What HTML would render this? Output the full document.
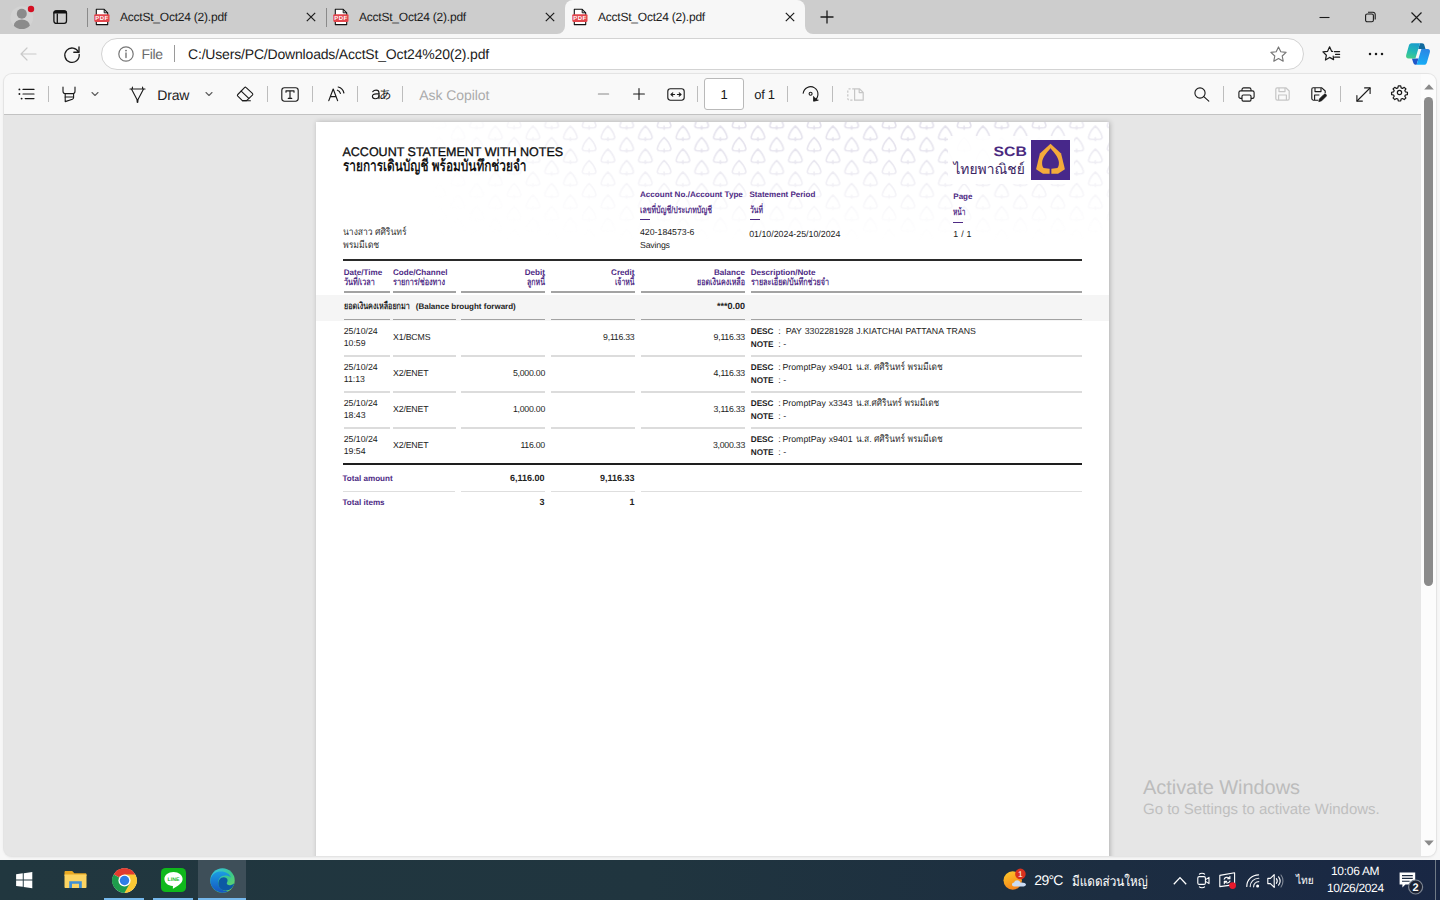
<!DOCTYPE html>
<html lang="en">
<head>
<meta charset="utf-8">
<title>AcctSt_Oct24 (2).pdf</title>
<style>
*{box-sizing:border-box;margin:0;padding:0}
html,body{width:1440px;height:900px;overflow:hidden}
body{position:relative;background:#f7f7f7;font-family:"Liberation Sans",sans-serif;color:#1b1b1b;text-rendering:geometricPrecision}
.abs{position:absolute}
svg{position:absolute;overflow:visible}
.t{position:absolute;white-space:nowrap;line-height:1}
/* ---------- tab strip ---------- */
#tabbar{position:absolute;left:0;top:0;width:1440px;height:34px;background:#cdcdcd}
#activetab{position:absolute;left:565px;top:0;width:240px;height:34px;background:#f7f7f7;border-radius:8px 8px 0 0}
.tabtitle{font-size:12px;top:10.5px;color:#1b1b1b;letter-spacing:-0.22px}
.tsep{position:absolute;width:1px;top:8px;height:19px;background:#8a8a8a}
/* ---------- address row ---------- */
#addr{position:absolute;left:0;top:34px;width:1440px;height:40px;background:#f7f7f7}
#pill{position:absolute;left:101px;top:4px;width:1203px;height:32px;background:#fff;border:1px solid #d3d3d3;border-radius:16px}
/* ---------- pdf toolbar ---------- */
#pdfwrap{position:absolute;left:4px;top:74px;width:1432px;height:782px;background:#e6e6e6;border-radius:8px;overflow:hidden;box-shadow:0 0 0 1px #e4e4e4,0 1px 3px rgba(0,0,0,.10)}
#ptool{position:absolute;left:0;top:0;width:1417px;height:41px;background:#f9f9f9;border-bottom:1px solid #c2c2c2}
.psep{position:absolute;width:1px;top:12px;height:16px;background:#bdbdbd}
#sbar{position:absolute;left:1417px;top:0;width:15px;height:783px;background:#fcfcfc}
/* ---------- page ---------- */
#page{position:absolute;left:312px;top:48px;width:793px;height:760px;background:#fff;box-shadow:1px 0 5px rgba(0,0,0,.24)}
/* ---------- taskbar ---------- */
#taskbar{position:absolute;left:0;top:860px;width:1440px;height:40px;background:linear-gradient(90deg,#21373f 0%,#20353f 45%,#1d2f40 70%,#192744 100%)}
svg.th text{font-family:"Liberation Sans",sans-serif}
</style>
</head>
<body>

<!-- ================= TAB STRIP ================= -->
<div id="tabbar">
  <div id="activetab"></div>
  <!-- inverted corners of the active tab -->
  <svg style="left:557px;top:26px" width="8" height="8" viewBox="0 0 8 8"><path d="M8 0V8H0A8 8 0 0 0 8 0Z" fill="#f7f7f7"/></svg>
  <svg style="left:805px;top:26px" width="8" height="8" viewBox="0 0 8 8"><path d="M0 0V8H8A8 8 0 0 1 0 0Z" fill="#f7f7f7"/></svg>

  <!-- profile avatar -->
  <svg style="left:9px;top:5px" width="28" height="25" viewBox="0 0 28 25">
    <defs><clipPath id="avc"><circle cx="12.8" cy="12.6" r="11.4"/></clipPath></defs>
    <circle cx="12.8" cy="12.6" r="11.4" fill="#d3d3d3"/>
    <g clip-path="url(#avc)" fill="#8b8b8b"><circle cx="12.8" cy="8.8" r="5"/><ellipse cx="12.8" cy="20.4" rx="8" ry="5.8"/></g>
    <circle cx="22" cy="4" r="3.2" fill="#d40f22"/>
  </svg>

  <!-- tab actions -->
  <svg style="left:52px;top:9px" width="16" height="16" viewBox="0 0 16 16" fill="none" stroke="#111" stroke-width="1.3">
    <rect x="1.9" y="1.8" width="12.6" height="12.6" rx="2.4"/>
    <path d="M1.3 4.6V4.2C1.3 2.4 2.5 1.2 4.3 1.2H12.1C13.9 1.2 15.1 2.4 15.1 4.2V4.6Z" fill="#111" stroke="none"/>
    <path d="M5.3 4.4V14.2"/>
  </svg>

  <div class="tsep" style="left:87px"></div>
  <div class="tsep" style="left:326px"></div>

  <!-- tab 1 -->
  <svg class="pdfico" style="left:94px;top:8px" width="16" height="18" viewBox="0 0 16 18">
    <path d="M2.3 1.3H10.2L13.7 4.8V16.6H2.3Z" fill="#fff" stroke="#111" stroke-width="1.1" stroke-linejoin="round"/>
    <path d="M10.2 1.3V4.8H13.7" fill="none" stroke="#111" stroke-width="1"/>
    <rect x="0.3" y="6.2" width="15.2" height="7.7" rx="1.1" fill="#e2464c"/>
    <text x="7.9" y="12.3" font-family="Liberation Sans, sans-serif" font-size="6" font-weight="700" fill="#fff" text-anchor="middle" letter-spacing="0.35">PDF</text>
  </svg>
  <div class="t tabtitle" style="left:120px">AcctSt_Oct24 (2).pdf</div>
  <svg style="left:306px;top:12px" width="10" height="10" viewBox="0 0 10 10" stroke="#1b1b1b" stroke-width="1.2" fill="none"><path d="M0.8 0.8L9.2 9.2M9.2 0.8L0.8 9.2"/></svg>

  <!-- tab 2 -->
  <svg class="pdfico" style="left:333px;top:8px" width="16" height="18" viewBox="0 0 16 18">
    <path d="M2.3 1.3H10.2L13.7 4.8V16.6H2.3Z" fill="#fff" stroke="#111" stroke-width="1.1" stroke-linejoin="round"/>
    <path d="M10.2 1.3V4.8H13.7" fill="none" stroke="#111" stroke-width="1"/>
    <rect x="0.3" y="6.2" width="15.2" height="7.7" rx="1.1" fill="#e2464c"/>
    <text x="7.9" y="12.3" font-family="Liberation Sans, sans-serif" font-size="6" font-weight="700" fill="#fff" text-anchor="middle" letter-spacing="0.35">PDF</text>
  </svg>
  <div class="t tabtitle" style="left:359px">AcctSt_Oct24 (2).pdf</div>
  <svg style="left:545px;top:12px" width="10" height="10" viewBox="0 0 10 10" stroke="#1b1b1b" stroke-width="1.2" fill="none"><path d="M0.8 0.8L9.2 9.2M9.2 0.8L0.8 9.2"/></svg>

  <!-- tab 3 (active) -->
  <svg class="pdfico" style="left:572px;top:8px" width="16" height="18" viewBox="0 0 16 18">
    <path d="M2.3 1.3H10.2L13.7 4.8V16.6H2.3Z" fill="#fff" stroke="#111" stroke-width="1.1" stroke-linejoin="round"/>
    <path d="M10.2 1.3V4.8H13.7" fill="none" stroke="#111" stroke-width="1"/>
    <rect x="0.3" y="6.2" width="15.2" height="7.7" rx="1.1" fill="#e2464c"/>
    <text x="7.9" y="12.3" font-family="Liberation Sans, sans-serif" font-size="6" font-weight="700" fill="#fff" text-anchor="middle" letter-spacing="0.35">PDF</text>
  </svg>
  <div class="t tabtitle" style="left:598px">AcctSt_Oct24 (2).pdf</div>
  <svg style="left:785px;top:12px" width="10" height="10" viewBox="0 0 10 10" stroke="#1b1b1b" stroke-width="1.2" fill="none"><path d="M0.8 0.8L9.2 9.2M9.2 0.8L0.8 9.2"/></svg>

  <!-- new tab -->
  <svg style="left:820px;top:10px" width="14" height="14" viewBox="0 0 14 14" stroke="#1b1b1b" stroke-width="1.3" fill="none"><path d="M7 0.5V13.5M0.5 7H13.5"/></svg>

  <!-- window controls -->
  <svg style="left:1319px;top:12px" width="11" height="11" viewBox="0 0 11 11" stroke="#1b1b1b" stroke-width="1.1" fill="none"><path d="M0.5 5.5H10.5"/></svg>
  <svg style="left:1365px;top:11px" width="11" height="12" viewBox="0 0 11 12" stroke="#1b1b1b" stroke-width="1.1" fill="none"><rect x="0.6" y="3" width="7.8" height="7.8" rx="1.6"/><path d="M3 1.2H8A2.2 2.2 0 0 1 10.2 3.4V8.4"/></svg>
  <svg style="left:1411px;top:12px" width="11" height="11" viewBox="0 0 11 11" stroke="#1b1b1b" stroke-width="1.2" fill="none"><path d="M0.5 0.5L10.5 10.5M10.5 0.5L0.5 10.5"/></svg>
</div>

<!-- ================= ADDRESS ROW ================= -->
<div id="addr">
  <!-- back (disabled) -->
  <svg style="left:20px;top:13px" width="17" height="14" viewBox="0 0 17 14" stroke="#c9c9c9" stroke-width="1.2" fill="none" stroke-linecap="round" stroke-linejoin="round"><path d="M16 7H1.2M7 1L1 7L7 13"/></svg>
  <!-- refresh -->
  <svg style="left:63px;top:11px" width="18" height="18" viewBox="0 0 18 18" stroke="#1b1b1b" stroke-width="1.35" fill="none" stroke-linecap="round" stroke-linejoin="round"><path d="M15.6 7.2A7.2 7.2 0 1 0 16.2 9.4"/><path d="M16 2V7.2H10.8"/></svg>

  <div id="pill"></div>
  <!-- info -->
  <svg style="left:118px;top:12px" width="16" height="16" viewBox="0 0 16 16" fill="none"><circle cx="8" cy="8" r="7.2" stroke="#767676" stroke-width="1.2"/><path d="M8 7V11.6" stroke="#767676" stroke-width="1.4" stroke-linecap="round"/><circle cx="8" cy="4.6" r="0.95" fill="#767676"/></svg>
  <div class="t" style="left:141.5px;top:13px;font-size:14px;color:#6b6b6b;letter-spacing:-0.3px">File</div>
  <div class="abs" style="left:174px;top:11px;width:1px;height:17px;background:#9a9a9a"></div>
  <div class="t" style="left:188px;top:13px;font-size:14px;color:#1b1b1b;letter-spacing:-0.18px">C:/Users/PC/Downloads/AcctSt_Oct24%20(2).pdf</div>
  <!-- add favourite star -->
  <svg style="left:1270px;top:12px" width="17" height="16" viewBox="0 0 17 16" fill="none" stroke="#767676" stroke-width="1.15" stroke-linejoin="round"><path d="M8.5 0.9L10.8 5.7L16.1 6.4L12.2 10L13.2 15.2L8.5 12.6L3.8 15.2L4.8 10L0.9 6.4L6.2 5.7Z"/></svg>
  <!-- favourites -->
  <svg style="left:1322px;top:11px" width="19" height="18" viewBox="0 0 19 18" fill="none" stroke="#1b1b1b" stroke-width="1.2" stroke-linejoin="round" stroke-linecap="round"><path d="M11.2 11.2L11.6 14.6L7.6 12.4L3.4 15L4.4 10.2L0.9 6.9L5.6 6.3L7.6 1.8L9.6 6.3L10.6 6.4"/><path d="M12.4 6.6H17.6M13.6 9.4H17.6M12.6 12.2H17.6"/></svg>
  <!-- more -->
  <svg style="left:1367px;top:18px" width="18" height="4" viewBox="0 0 18 4" fill="#1b1b1b"><circle cx="3" cy="2" r="1.25"/><circle cx="9" cy="2" r="1.25"/><circle cx="15" cy="2" r="1.25"/></svg>
  <!-- copilot -->
  <svg style="left:1400px;top:4px" width="36" height="32" viewBox="0 0 36 32">
    <defs>
      <linearGradient id="cpA" x1="0.6" y1="0" x2="0.3" y2="1"><stop offset="0" stop-color="#189dcc"/><stop offset="0.55" stop-color="#22b9b4"/><stop offset="1" stop-color="#45cd88"/></linearGradient>
      <linearGradient id="cpB" x1="0.6" y1="0" x2="0.4" y2="1"><stop offset="0" stop-color="#2c86e4"/><stop offset="1" stop-color="#17adf6"/></linearGradient>
    </defs>
    <path d="M20 5.3H22C23.4 5.3 24 6 24.4 7.2L25.5 11H18.2Z" fill="#116a9e"/>
    <path d="M11.9 20.6H18.5L16.6 26.7H15.6C14.4 26.7 13.7 26 13.3 24.8Z" fill="#2057c9"/>
    <path d="M11.5 5.3H20L15.4 20.6H8.6C6.6 20.6 5.6 19 6.2 17.1L8.9 7.6C9.3 6.2 10.2 5.3 11.5 5.3Z" fill="url(#cpA)"/>
    <path d="M21.4 11H27.8C29.6 11 30.4 12.6 29.8 14.4L26.9 24.4C26.4 26 25.6 26.7 24.2 26.7H16.6Z" fill="url(#cpB)"/>
  </svg>
</div>

<!-- ================= PDF VIEWER ================= -->
<div id="pdfwrap">
  <div id="page">
    <!-- watermark pattern -->
    <svg style="left:0;top:0" width="793" height="250" viewBox="0 0 793 250">
      <defs>
        <path id="lf" d="M6.9 14.3L3.2 14.1Q0.9 13.8 1.3 11.5C2.1 8.2 4.8 3.8 8 0.9C11.2 3.8 13.9 8.2 14.7 11.5Q15.1 13.8 12.8 14.1L9.1 14.3M8 12.6V15.4" fill="none" stroke="#e2e0eb" stroke-width="1.5" stroke-linejoin="round" stroke-linecap="round"/>
        <pattern id="leafpat" width="37.5" height="23" patternUnits="userSpaceOnUse" patternTransform="translate(21.4 3.2)">
          <use href="#lf"/>
          <use href="#lf" transform="translate(18.75 11.5)"/>
          <use href="#lf" transform="translate(18.75 -11.5)"/>
        </pattern>
        <linearGradient id="wmV" gradientUnits="userSpaceOnUse" x1="0" y1="0" x2="0" y2="118">
          <stop offset="0" stop-color="#fff" stop-opacity="1"/>
          <stop offset="0.3" stop-color="#fff" stop-opacity="0.85"/>
          <stop offset="0.55" stop-color="#fff" stop-opacity="0.45"/>
          <stop offset="0.8" stop-color="#fff" stop-opacity="0.14"/>
          <stop offset="1" stop-color="#fff" stop-opacity="0"/>
        </linearGradient>
        <linearGradient id="wmH" gradientUnits="userSpaceOnUse" x1="110" y1="0" x2="793" y2="0">
          <stop offset="0" stop-color="#fff" stop-opacity="0"/>
          <stop offset="0.18" stop-color="#fff" stop-opacity="0.45"/>
          <stop offset="0.4" stop-color="#fff" stop-opacity="1"/>
          <stop offset="0.85" stop-color="#fff" stop-opacity="1"/>
          <stop offset="1" stop-color="#fff" stop-opacity="0.7"/>
        </linearGradient>
        <mask id="wmmaskV" maskUnits="userSpaceOnUse" x="0" y="0" width="793" height="250"><rect width="793" height="250" fill="url(#wmV)"/></mask>
        <mask id="wmmaskH" maskUnits="userSpaceOnUse" x="0" y="0" width="793" height="250"><rect width="793" height="250" fill="url(#wmH)"/></mask>
      </defs>
      <g mask="url(#wmmaskH)"><rect width="793" height="250" fill="url(#leafpat)" mask="url(#wmmaskV)"/></g>
    </svg>
    <!-- SCB logo -->
    <div class="abs" style="left:632px;top:14px;width:126px;height:48px;background:rgba(255,255,255,.92)"></div>
    <svg style="left:634px;top:16px" width="122" height="46" viewBox="0 0 122 46" role="img" aria-label="SCB ไทยพาณิชย์">
      <text x="43.5" y="18.1" font-family="Liberation Sans, sans-serif" font-size="13.65" font-weight="700" fill="#4a2a80" textLength="33.3" lengthAdjust="spacingAndGlyphs">SCB</text>
      <text x="3.4" y="36.3" font-family="Liberation Sans, sans-serif" font-size="14.27" fill="#3b2563" textLength="71.4" lengthAdjust="spacingAndGlyphs">ไทยพาณิชย์</text>
      <g transform="translate(81 2)">
        <rect width="39" height="40" fill="#47288a"/>
        <path d="M19.5 3.8L30.1 13.5L33.9 29.2L27 33.8H12L5.1 29.2L8.9 13.5Z" fill="#f3ab3b"/>
        <path d="M19.5 8.3C16 12.6 11.3 17.6 11.1 22.2C11 25 11.5 27 12.6 27.9L18.6 28.8H20.4L26.4 27.9C27.5 27 28 25 27.9 22.2C27.7 17.6 23 12.6 19.5 8.3Z" fill="#47288a"/>
        <rect x="18.65" y="28" width="1.7" height="6.4" fill="#47288a"/>
      </g>
    </svg>
    <!-- statement text -->
    <div class="t" style="top:23.62px;font-size:12.5px;color:#0c0c0c;left:26.50px;-webkit-text-stroke:0.3px #0c0c0c;">ACCOUNT STATEMENT WITH NOTES</div>
    <svg class="th" style="left:26.60px;top:30.78px" width="183.50" height="23.24" viewBox="4 -115 1498 150" preserveAspectRatio="none" role="img"><text x="4" y="0" font-size="100" font-weight="700" fill="#111" textLength="1498" lengthAdjust="spacingAndGlyphs">รายการเดินบัญชี พร้อมบันทึกช่วยจำ</text></svg>
    <svg class="th" style="left:26.60px;top:101.60px" width="63.50" height="14.86" viewBox="5 -115 741 150" preserveAspectRatio="none" role="img"><text x="5" y="0" font-size="100" fill="#333" textLength="741" lengthAdjust="spacingAndGlyphs">นางสาว ศศิรินทร์</text></svg>
    <svg class="th" style="left:26.60px;top:115.40px" width="36.20" height="14.86" viewBox="2 -115 412 150" preserveAspectRatio="none" role="img"><text x="2" y="0" font-size="100" fill="#333" textLength="412" lengthAdjust="spacingAndGlyphs">พรมมีเดช</text></svg>
    <div class="t" style="top:68.64px;font-size:8.1px;font-weight:700;color:#4e2a84;left:324.00px;">Account No./Account Type</div>
    <svg class="th" style="left:324.00px;top:80.22px" width="72.00" height="14.32" viewBox="8 -115 986 150" preserveAspectRatio="none" role="img"><text x="8" y="0" font-size="100" font-weight="700" fill="#4e2a84" textLength="986" lengthAdjust="spacingAndGlyphs">เลขที่บัญชี/ประเภทบัญชี</text></svg>
    <div class="abs" style="left:324.00px;top:97.00px;width:10.00px;height:1.2px;background:#4e2a84"></div>
    <div class="t" style="top:105.59px;font-size:8.75px;left:324.00px;">420-184573-6</div>
    <div class="t" style="top:119.39px;font-size:8.75px;letter-spacing:-0.2px;left:324.00px;">Savings</div>
    <div class="t" style="top:68.73px;font-size:8.0px;font-weight:700;color:#4e2a84;left:433.50px;">Statement Period</div>
    <svg class="th" style="left:433.60px;top:80.22px" width="13.00" height="14.32" viewBox="2 -115 170 150" preserveAspectRatio="none" role="img"><text x="2" y="0" font-size="100" font-weight="700" fill="#4e2a84" textLength="170" lengthAdjust="spacingAndGlyphs">วันที่</text></svg>
    <div class="abs" style="left:433.50px;top:97.00px;width:10.00px;height:1.2px;background:#4e2a84"></div>
    <div class="t" style="top:108.13px;font-size:8.82px;left:433.20px;">01/10/2024-25/10/2024</div>
    <div class="t" style="top:70.53px;font-size:8.0px;font-weight:700;color:#4e2a84;left:637.30px;">Page</div>
    <svg class="th" style="left:637.30px;top:82.22px" width="12.50" height="14.32" viewBox="7 -115 161 150" preserveAspectRatio="none" role="img"><text x="7" y="0" font-size="100" font-weight="700" fill="#4e2a84" textLength="161" lengthAdjust="spacingAndGlyphs">หน้า</text></svg>
    <div class="abs" style="left:637.30px;top:100.00px;width:10.00px;height:1.2px;background:#4e2a84"></div>
    <div class="t" style="top:108.13px;font-size:8.82px;letter-spacing:0.25px;left:637.30px;">1 / 1</div>
    <div class="abs" style="left:26.50px;top:136.70px;width:739.50px;height:1.9px;background:#2a2a2a"></div>
    <div class="t" style="top:146.54px;font-size:8.1px;font-weight:700;color:#4e2a84;left:27.75px;">Date/Time</div>
    <svg class="th" style="left:27.80px;top:152.12px" width="30.75" height="14.32" viewBox="2 -115 413 150" preserveAspectRatio="none" role="img"><text x="2" y="0" font-size="100" font-weight="700" fill="#4e2a84" textLength="413" lengthAdjust="spacingAndGlyphs">วันที่/เวลา</text></svg>
    <div class="t" style="top:146.54px;font-size:8.1px;font-weight:700;color:#4e2a84;left:77.00px;">Code/Channel</div>
    <svg class="th" style="left:77.00px;top:152.12px" width="52.00" height="14.32" viewBox="4 -115 714 150" preserveAspectRatio="none" role="img"><text x="4" y="0" font-size="100" font-weight="700" fill="#4e2a84" textLength="714" lengthAdjust="spacingAndGlyphs">รายการ/ช่องทาง</text></svg>
    <div class="t" style="top:146.54px;font-size:8.1px;font-weight:700;color:#4e2a84;right:564.00px;">Debit</div>
    <svg class="th" style="left:211.00px;top:152.12px" width="18.00" height="14.32" viewBox="3 -115 245 150" preserveAspectRatio="none" role="img"><text x="3" y="0" font-size="100" font-weight="700" fill="#4e2a84" textLength="245" lengthAdjust="spacingAndGlyphs">ลูกหนี้</text></svg>
    <div class="t" style="top:146.54px;font-size:8.1px;font-weight:700;color:#4e2a84;right:474.50px;">Credit</div>
    <svg class="th" style="left:299.00px;top:152.12px" width="19.50" height="14.32" viewBox="8 -115 256 150" preserveAspectRatio="none" role="img"><text x="8" y="0" font-size="100" font-weight="700" fill="#4e2a84" textLength="256" lengthAdjust="spacingAndGlyphs">เจ้าหนี้</text></svg>
    <div class="t" style="top:146.54px;font-size:8.1px;font-weight:700;color:#4e2a84;right:364.00px;">Balance</div>
    <svg class="th" style="left:381.00px;top:152.12px" width="48.00" height="14.32" viewBox="4 -115 659 150" preserveAspectRatio="none" role="img"><text x="4" y="0" font-size="100" font-weight="700" fill="#4e2a84" textLength="659" lengthAdjust="spacingAndGlyphs">ยอดเงินคงเหลือ</text></svg>
    <div class="t" style="top:146.54px;font-size:8.1px;font-weight:700;color:#4e2a84;left:434.70px;">Description/Note</div>
    <svg class="th" style="left:434.80px;top:152.12px" width="78.00" height="14.32" viewBox="4 -115 1048 150" preserveAspectRatio="none" role="img"><text x="4" y="0" font-size="100" font-weight="700" fill="#4e2a84" textLength="1048" lengthAdjust="spacingAndGlyphs">รายละเอียด/บันทึกช่วยจำ</text></svg>
    <div class="abs" style="left:27.50px;top:169.10px;width:46.00px;height:1.7px;background:#a3a3a3"></div>
    <div class="abs" style="left:77.00px;top:169.10px;width:63.00px;height:1.7px;background:#a3a3a3"></div>
    <div class="abs" style="left:145.00px;top:169.10px;width:84.00px;height:1.7px;background:#a3a3a3"></div>
    <div class="abs" style="left:234.50px;top:169.10px;width:84.00px;height:1.7px;background:#a3a3a3"></div>
    <div class="abs" style="left:324.50px;top:169.10px;width:104.50px;height:1.7px;background:#a3a3a3"></div>
    <div class="abs" style="left:435.00px;top:169.10px;width:330.50px;height:1.7px;background:#a3a3a3"></div>
    <div class="abs" style="left:0;top:172.5px;width:793px;height:26.2px;background:#f5f5f5"></div>
    <svg class="th" style="left:27.80px;top:176.22px" width="65.75" height="14.32" viewBox="4 -115 895 150" preserveAspectRatio="none" role="img"><text x="4" y="0" font-size="100" font-weight="700" fill="#222" textLength="895" lengthAdjust="spacingAndGlyphs">ยอดเงินคงเหลือยกมา</text></svg>
    <div class="t" style="top:180.53px;font-size:8.0px;font-weight:700;color:#222;left:99.75px;">(Balance brought forward)</div>
    <div class="t" style="top:179.78px;font-size:9px;font-weight:700;color:#222;right:364.00px;">***0.00</div>
    <div class="abs" style="left:27.50px;top:196.90px;width:46.00px;height:1.5px;background:#a3a3a3"></div>
    <div class="abs" style="left:77.00px;top:196.90px;width:63.00px;height:1.5px;background:#a3a3a3"></div>
    <div class="abs" style="left:145.00px;top:196.90px;width:84.00px;height:1.5px;background:#a3a3a3"></div>
    <div class="abs" style="left:234.50px;top:196.90px;width:84.00px;height:1.5px;background:#a3a3a3"></div>
    <div class="abs" style="left:324.50px;top:196.90px;width:104.50px;height:1.5px;background:#a3a3a3"></div>
    <div class="abs" style="left:435.00px;top:196.90px;width:330.50px;height:1.5px;background:#a3a3a3"></div>
    <div class="t" style="top:205.09px;font-size:8.75px;letter-spacing:-0.02px;left:27.75px;">25/10/24</div>
    <div class="t" style="top:216.89px;font-size:8.75px;letter-spacing:-0.02px;left:27.75px;">10:59</div>
    <div class="t" style="top:210.59px;font-size:8.75px;letter-spacing:-0.15px;left:77.00px;">X1/BCMS</div>
    <div class="t" style="top:210.59px;font-size:8.75px;letter-spacing:-0.25px;right:474.50px;">9,116.33</div>
    <div class="t" style="top:210.59px;font-size:8.75px;letter-spacing:-0.25px;right:364.00px;">9,116.33</div>
    <div class="t" style="top:205.09px;font-size:8.75px;left:434.75px;"><b style="font-size:8.2px">DESC</b>&nbsp; :</div>
    <div class="t" style="top:205.09px;font-size:8.75px;left:469.75px;word-spacing:0.45px;">PAY 3302281928 J.KIATCHAI PATTANA TRANS</div>
    <div class="t" style="top:217.89px;font-size:8.75px;left:434.75px;"><b style="font-size:8.2px">NOTE</b>&nbsp; : -</div>
    <div class="abs" style="left:27.50px;top:233.40px;width:46.00px;height:1.2px;background:#dcdcdc"></div>
    <div class="abs" style="left:77.00px;top:233.40px;width:63.00px;height:1.2px;background:#dcdcdc"></div>
    <div class="abs" style="left:145.00px;top:233.40px;width:84.00px;height:1.2px;background:#dcdcdc"></div>
    <div class="abs" style="left:234.50px;top:233.40px;width:84.00px;height:1.2px;background:#dcdcdc"></div>
    <div class="abs" style="left:324.50px;top:233.40px;width:104.50px;height:1.2px;background:#dcdcdc"></div>
    <div class="abs" style="left:435.00px;top:233.40px;width:330.50px;height:1.2px;background:#dcdcdc"></div>
    <div class="t" style="top:241.09px;font-size:8.75px;letter-spacing:-0.02px;left:27.75px;">25/10/24</div>
    <div class="t" style="top:252.89px;font-size:8.75px;letter-spacing:-0.02px;left:27.75px;">11:13</div>
    <div class="t" style="top:246.59px;font-size:8.75px;letter-spacing:-0.15px;left:77.00px;">X2/ENET</div>
    <div class="t" style="top:246.59px;font-size:8.75px;letter-spacing:-0.25px;right:564.00px;">5,000.00</div>
    <div class="t" style="top:246.59px;font-size:8.75px;letter-spacing:-0.25px;right:364.00px;">4,116.33</div>
    <div class="t" style="top:241.09px;font-size:8.75px;left:434.75px;"><b style="font-size:8.2px">DESC</b>&nbsp; :</div>
    <div class="t" style="top:241.09px;font-size:8.75px;left:466.50px;word-spacing:0.45px;">PromptPay x9401</div>
    <svg class="th" style="left:540.30px;top:236.80px" width="86.75" height="14.86" viewBox="5 -115 1030 150" preserveAspectRatio="none" role="img"><text x="5" y="0" font-size="100" fill="#2b2b2b" textLength="1030" lengthAdjust="spacingAndGlyphs">น.ส. ศศิรินทร์ พรมมีเดช</text></svg>
    <div class="t" style="top:253.89px;font-size:8.75px;left:434.75px;"><b style="font-size:8.2px">NOTE</b>&nbsp; : -</div>
    <div class="abs" style="left:27.50px;top:269.40px;width:46.00px;height:1.2px;background:#dcdcdc"></div>
    <div class="abs" style="left:77.00px;top:269.40px;width:63.00px;height:1.2px;background:#dcdcdc"></div>
    <div class="abs" style="left:145.00px;top:269.40px;width:84.00px;height:1.2px;background:#dcdcdc"></div>
    <div class="abs" style="left:234.50px;top:269.40px;width:84.00px;height:1.2px;background:#dcdcdc"></div>
    <div class="abs" style="left:324.50px;top:269.40px;width:104.50px;height:1.2px;background:#dcdcdc"></div>
    <div class="abs" style="left:435.00px;top:269.40px;width:330.50px;height:1.2px;background:#dcdcdc"></div>
    <div class="t" style="top:277.09px;font-size:8.75px;letter-spacing:-0.02px;left:27.75px;">25/10/24</div>
    <div class="t" style="top:288.89px;font-size:8.75px;letter-spacing:-0.02px;left:27.75px;">18:43</div>
    <div class="t" style="top:282.59px;font-size:8.75px;letter-spacing:-0.15px;left:77.00px;">X2/ENET</div>
    <div class="t" style="top:282.59px;font-size:8.75px;letter-spacing:-0.25px;right:564.00px;">1,000.00</div>
    <div class="t" style="top:282.59px;font-size:8.75px;letter-spacing:-0.25px;right:364.00px;">3,116.33</div>
    <div class="t" style="top:277.09px;font-size:8.75px;left:434.75px;"><b style="font-size:8.2px">DESC</b>&nbsp; :</div>
    <div class="t" style="top:277.09px;font-size:8.75px;left:466.50px;word-spacing:0.45px;">PromptPay x3343</div>
    <svg class="th" style="left:540.30px;top:272.80px" width="83.25" height="14.86" viewBox="5 -115 997 150" preserveAspectRatio="none" role="img"><text x="5" y="0" font-size="100" fill="#2b2b2b" textLength="997" lengthAdjust="spacingAndGlyphs">น.ส.ศศิรินทร์ พรมมีเดช</text></svg>
    <div class="t" style="top:289.89px;font-size:8.75px;left:434.75px;"><b style="font-size:8.2px">NOTE</b>&nbsp; : -</div>
    <div class="abs" style="left:27.50px;top:305.40px;width:46.00px;height:1.2px;background:#dcdcdc"></div>
    <div class="abs" style="left:77.00px;top:305.40px;width:63.00px;height:1.2px;background:#dcdcdc"></div>
    <div class="abs" style="left:145.00px;top:305.40px;width:84.00px;height:1.2px;background:#dcdcdc"></div>
    <div class="abs" style="left:234.50px;top:305.40px;width:84.00px;height:1.2px;background:#dcdcdc"></div>
    <div class="abs" style="left:324.50px;top:305.40px;width:104.50px;height:1.2px;background:#dcdcdc"></div>
    <div class="abs" style="left:435.00px;top:305.40px;width:330.50px;height:1.2px;background:#dcdcdc"></div>
    <div class="t" style="top:313.09px;font-size:8.75px;letter-spacing:-0.02px;left:27.75px;">25/10/24</div>
    <div class="t" style="top:324.89px;font-size:8.75px;letter-spacing:-0.02px;left:27.75px;">19:54</div>
    <div class="t" style="top:318.59px;font-size:8.75px;letter-spacing:-0.15px;left:77.00px;">X2/ENET</div>
    <div class="t" style="top:318.59px;font-size:8.75px;letter-spacing:-0.25px;right:564.00px;">116.00</div>
    <div class="t" style="top:318.59px;font-size:8.75px;letter-spacing:-0.25px;right:364.00px;">3,000.33</div>
    <div class="t" style="top:313.09px;font-size:8.75px;left:434.75px;"><b style="font-size:8.2px">DESC</b>&nbsp; :</div>
    <div class="t" style="top:313.09px;font-size:8.75px;left:466.50px;word-spacing:0.45px;">PromptPay x9401</div>
    <svg class="th" style="left:540.30px;top:308.80px" width="86.75" height="14.86" viewBox="5 -115 1030 150" preserveAspectRatio="none" role="img"><text x="5" y="0" font-size="100" fill="#2b2b2b" textLength="1030" lengthAdjust="spacingAndGlyphs">น.ส. ศศิรินทร์ พรมมีเดช</text></svg>
    <div class="t" style="top:325.89px;font-size:8.75px;left:434.75px;"><b style="font-size:8.2px">NOTE</b>&nbsp; : -</div>
    <div class="abs" style="left:26.50px;top:340.80px;width:739.50px;height:1.9px;background:#1e1e1e"></div>
    <div class="t" style="top:352.84px;font-size:8.1px;font-weight:700;color:#4e2a84;left:26.50px;">Total amount</div>
    <div class="t" style="top:352.08px;font-size:9px;font-weight:700;color:#222;right:564.50px;">6,116.00</div>
    <div class="t" style="top:352.08px;font-size:9px;font-weight:700;color:#222;right:474.50px;">9,116.33</div>
    <div class="abs" style="left:26.50px;top:369.00px;width:112.50px;height:1.1px;background:#dedede"></div>
    <div class="abs" style="left:145.00px;top:369.00px;width:84.00px;height:1.1px;background:#dedede"></div>
    <div class="abs" style="left:234.50px;top:369.00px;width:84.00px;height:1.1px;background:#dedede"></div>
    <div class="abs" style="left:324.50px;top:369.00px;width:441.00px;height:1.1px;background:#dedede"></div>
    <div class="t" style="top:377.04px;font-size:8.1px;font-weight:700;color:#4e2a84;left:26.50px;">Total items</div>
    <div class="t" style="top:376.28px;font-size:9px;font-weight:700;color:#222;right:564.50px;">3</div>
    <div class="t" style="top:376.28px;font-size:9px;font-weight:700;color:#222;right:474.50px;">1</div>
    <!-- /statement text -->
  </div>
<div id="ptool">
  <!-- contents -->
  <svg style="left:14px;top:13px" width="17" height="14" viewBox="0 0 17 14" fill="none" stroke="#1b1b1b" stroke-width="1.2" stroke-linecap="round"><path d="M5 2.4H16M5 7H16M7.2 11.6H16"/><circle cx="1.4" cy="2.4" r="0.95" fill="#1b1b1b" stroke="none"/><circle cx="1.4" cy="7" r="0.95" fill="#1b1b1b" stroke="none"/><circle cx="3.6" cy="11.6" r="0.95" fill="#1b1b1b" stroke="none"/></svg>
  <div class="psep" style="left:43.5px"></div>
  <!-- highlighter -->
  <svg style="left:57px;top:11.5px" width="16" height="17" viewBox="0 0 16 17" fill="none" stroke="#1b1b1b" stroke-width="1.12" stroke-linejoin="round" stroke-linecap="round"><path d="M2 1V5.2C2 6.6 3 7.6 4.4 7.6H11.6C13 7.6 14 6.6 14 5.2V1"/><path d="M4.2 7.8V15.6L11.4 13.2C12.2 12.9 12.6 12.3 12.6 11.5V7.8"/><path d="M4.2 11H12.4"/></svg>
  <svg style="left:87px;top:17px" width="8" height="6" viewBox="0 0 8 6" fill="none" stroke="#5f5f5f" stroke-width="1.1" stroke-linecap="round" stroke-linejoin="round"><path d="M1 1.5L4 4.5L7 1.5"/></svg>
  <!-- draw -->
  <svg style="left:124.5px;top:11.5px" width="17" height="17" viewBox="0 0 17 17" fill="none" stroke="#1b1b1b" stroke-width="1.12" stroke-linejoin="round" stroke-linecap="round"><path d="M3.4 1V2.6M13.6 1V2.6"/><path d="M1 3H16"/><path d="M2.6 3.2L8.5 14.6L14.4 3.2"/><path d="M8.5 14.4V16" stroke-width="1.8"/></svg>
  <div class="t" style="left:153.2px;top:13.5px;font-size:14px;color:#1b1b1b;letter-spacing:-0.15px">Draw</div>
  <svg style="left:201px;top:17px" width="8" height="6" viewBox="0 0 8 6" fill="none" stroke="#5f5f5f" stroke-width="1.1" stroke-linecap="round" stroke-linejoin="round"><path d="M1 1.5L4 4.5L7 1.5"/></svg>
  <!-- eraser -->
  <svg style="left:232px;top:11.5px" width="18" height="17" viewBox="0 0 18 17" fill="none" stroke="#1b1b1b" stroke-width="1.12" stroke-linejoin="round" stroke-linecap="round"><path d="M10.2 1.6L16.4 7.4C16.9 7.9 16.9 8.6 16.4 9.1L10.6 14.6H6.4L1.8 10.2C1.3 9.7 1.3 9 1.8 8.5L8.5 1.6C9 1.1 9.7 1.1 10.2 1.6Z"/><path d="M5.2 5.2L12.8 12.4"/><path d="M6.4 14.7H14.4" /></svg>
  <div class="psep" style="left:263px"></div>
  <!-- text box -->
  <svg style="left:277px;top:12.5px" width="18" height="15" viewBox="0 0 18 15" fill="none" stroke="#1b1b1b" stroke-width="1.12"><rect x="0.8" y="0.8" width="16.4" height="13.4" rx="2.6"/><path d="M5 5.2V3.8H13V5.2M9 3.8V11.2M7.2 11.3H10.8" stroke-width="1.15" stroke-linecap="round" stroke-linejoin="round"/></svg>
  <div class="psep" style="left:308px"></div>
  <!-- read aloud -->
  <svg style="left:323.5px;top:11.5px" width="17" height="16" viewBox="0 0 17 16" fill="none" stroke="#1b1b1b" stroke-width="1.2" stroke-linecap="round" stroke-linejoin="round"><path d="M0.8 14.6L5.2 3L9.6 14.6M2.4 10.6H8"/><path d="M9.4 4.2C11 4.7 12 5.8 12.4 7.4"/><path d="M10.2 1C13.4 1.8 15.2 3.8 15.9 7"/></svg>
  <div class="psep" style="left:353px"></div>
  <!-- translate -->
  <svg style="left:366.5px;top:12px" width="20" height="15" viewBox="0 0 20 15" role="img" aria-label="Translate"><g transform="translate(0.6 3.3)" fill="none" stroke="#1b1b1b" stroke-width="1.15" stroke-linecap="round"><path d="M1.2 2.4C2 1.3 3.1 0.8 4.5 0.8C6.4 0.8 7.4 1.9 7.4 3.7V9.3"/><path d="M7.4 4.5H4.6C2.3 4.5 0.8 5.3 0.8 7C0.8 8.5 1.9 9.4 3.5 9.4C5.5 9.4 7.4 8.2 7.4 6.2"/></g><text x="7.9" y="12.7" font-family="Liberation Sans, Noto Sans CJK JP, sans-serif" font-size="12.4" fill="#1b1b1b">あ</text></svg>
  <div class="psep" style="left:398px"></div>
  <div class="t" style="left:415.3px;top:13.5px;font-size:14px;color:#ababab;letter-spacing:-0.08px">Ask Copilot</div>
  <!-- zoom out / in / fit -->
  <svg style="left:593.5px;top:19px" width="11" height="2" viewBox="0 0 11 2"><path d="M0.4 1H10.6" stroke="#8a8a8a" stroke-width="1.2" stroke-linecap="round"/></svg>
  <svg style="left:628.5px;top:14px" width="12" height="12" viewBox="0 0 12 12"><path d="M6 0.6V11.4M0.6 6H11.4" stroke="#1b1b1b" stroke-width="1.12" stroke-linecap="round"/></svg>
  <svg style="left:662.5px;top:13.5px" width="18" height="13" viewBox="0 0 18 13" fill="none" stroke="#1b1b1b" stroke-width="1.12" stroke-linecap="round" stroke-linejoin="round"><rect x="0.8" y="0.8" width="16.4" height="11.4" rx="2.6"/><path d="M4.4 6.5H7.6M10.4 6.5H13.6" stroke-width="1.1"/><path d="M5.8 4.8L4 6.5L5.8 8.2M12.2 4.8L14 6.5L12.2 8.2" stroke-width="1.1"/></svg>
  <div class="psep" style="left:693px"></div>
  <!-- page number -->
  <div class="abs" style="left:700px;top:4px;width:40px;height:32px;background:#fff;border:1px solid #b9b9b9;border-radius:3px"></div>
  <div class="t" style="left:716.5px;top:14px;font-size:13px;color:#1b1b1b">1</div>
  <div class="t" style="left:750.3px;top:14px;font-size:13px;color:#1b1b1b;letter-spacing:-0.3px">of 1</div>
  <div class="psep" style="left:783px"></div>
  <!-- rotate -->
  <svg style="left:797.5px;top:11px" width="18" height="18" viewBox="0 0 18 18" fill="none" stroke="#1b1b1b" stroke-width="1.12" stroke-linecap="round" stroke-linejoin="round"><path d="M1.2 8.2A7.4 7.4 0 1 1 12.4 15.4"/><path d="M11.6 11.6L11.6 16.2L16.2 15.2" fill="#1b1b1b" stroke-width="0.9"/><circle cx="8.6" cy="8.8" r="1.5" stroke-width="1.1"/></svg>
  <div class="psep" style="left:828px"></div>
  <!-- page view (disabled) -->
  <svg style="left:842.5px;top:13.5px" width="17" height="13" viewBox="0 0 17 13" fill="none" stroke="#c6c6c6" stroke-width="1.2" stroke-linejoin="round"><path d="M7.6 0.8H12.4L16.2 4.4V12.2H7.6Z"/><path d="M12.2 0.9V4.6H16"/><path d="M7.4 0.8H2.4C1.5 0.8 0.8 1.5 0.8 2.4V10.6C0.8 11.5 1.5 12.2 2.4 12.2H7.4" stroke-dasharray="2.2 1.6"/></svg>

  <!-- search -->
  <svg style="left:1189.5px;top:12.5px" width="16" height="15" viewBox="0 0 16 15" fill="none" stroke="#1b1b1b" stroke-width="1.12" stroke-linecap="round"><circle cx="6" cy="6" r="5.1"/><path d="M9.8 9.6L14.8 14.2"/></svg>
  <div class="psep" style="left:1219px"></div>
  <!-- print -->
  <svg style="left:1233.5px;top:12.5px" width="17" height="15" viewBox="0 0 17 15" fill="none" stroke="#1b1b1b" stroke-width="1.12" stroke-linejoin="round"><path d="M4 3.8V2.6C4 1.6 4.7 0.9 5.7 0.9H11.3C12.3 0.9 13 1.6 13 2.6V3.8"/><path d="M4 11.4H2.6C1.6 11.4 0.9 10.7 0.9 9.7V5.6C0.9 4.6 1.6 3.9 2.6 3.9H14.4C15.4 3.9 16.1 4.6 16.1 5.6V9.7C16.1 10.7 15.4 11.4 14.4 11.4H13"/><rect x="4" y="8" width="9" height="6.1" rx="1.3"/></svg>
  <!-- save (disabled) -->
  <svg style="left:1270.5px;top:13px" width="15" height="14" viewBox="0 0 15 14" fill="none" stroke="#c6c6c6" stroke-width="1.2" stroke-linejoin="round"><path d="M2.2 0.8H10.8L14.2 4V11.6C14.2 12.5 13.5 13.2 12.6 13.2H2.4C1.5 13.2 0.8 12.5 0.8 11.6V2.2C0.8 1.4 1.4 0.8 2.2 0.8Z"/><path d="M4 0.9V4.6H10V0.9"/><path d="M3.6 13.1V8H11.4V13.1"/></svg>
  <!-- save as -->
  <svg style="left:1306.5px;top:13px" width="16" height="15" viewBox="0 0 16 15" fill="none" stroke="#1b1b1b" stroke-width="1.12" stroke-linejoin="round"><path d="M7.4 13.2H2.4C1.5 13.2 0.8 12.5 0.8 11.6V2.2C0.8 1.4 1.4 0.8 2.2 0.8H10.8L14.2 4V6"/><path d="M4 0.9V4.6H10V0.9"/><path d="M3.6 13.1V8H8.4"/><path d="M7.8 14.6L8.6 11.8L13 7.4C13.6 6.8 14.5 6.8 15 7.4C15.6 7.9 15.6 8.8 15 9.4L10.6 13.8Z" fill="#1b1b1b" stroke-width="0.8"/></svg>
  <div class="psep" style="left:1335.8px"></div>
  <!-- full screen -->
  <svg style="left:1351.5px;top:12.5px" width="15" height="15" viewBox="0 0 15 15" fill="none" stroke="#1b1b1b" stroke-width="1.12" stroke-linecap="round" stroke-linejoin="round"><path d="M1 14L14 1"/><path d="M8.6 0.9H14.1V6.4"/><path d="M0.9 8.6V14.1H6.4"/></svg>
  <!-- settings -->
  <svg style="left:1386.5px;top:9.8px" width="17" height="17" viewBox="0 0 24 24" fill="none" stroke="#1b1b1b" stroke-width="1.75" stroke-linejoin="round"><path d="M10.3 2.2h3.4l.6 2.9 1.9.8 2.5-1.6 2.4 2.4-1.6 2.5.8 1.9 2.9.6v3.4l-2.9.6-.8 1.9 1.6 2.5-2.4 2.4-2.5-1.6-1.9.8-.6 2.9h-3.4l-.6-2.9-1.9-.8-2.5 1.6-2.4-2.4 1.6-2.5-.8-1.9-2.9-.6v-3.4l2.9-.6.8-1.9-1.6-2.5 2.4-2.4 2.5 1.6 1.9-.8z" transform="translate(0 0.6) scale(1 0.95)"/><circle cx="12" cy="12" r="3"/></svg>
</div>
<!-- windows activation watermark -->
<div class="t" style="left:1139px;top:703.57px;font-size:20px;color:#bcbcbc;letter-spacing:-0.05px">Activate Windows</div>
<div class="t" style="left:1139px;top:727.60px;font-size:15px;color:#bfbfbf">Go to Settings to activate Windows.</div>
<div id="sbar">
  <svg style="left:2.6px;top:9.8px" width="10" height="6" viewBox="0 0 10 6"><path d="M5 0.2L9.8 5.6H0.2Z" fill="#8a8a8a"/></svg>
  <div class="abs" style="left:3px;top:23px;width:9px;height:489px;border-radius:4.5px;background:#8b8b8b"></div>
  <svg style="left:2.6px;top:766px" width="10" height="6" viewBox="0 0 10 6"><path d="M5 5.8L9.8 0.4H0.2Z" fill="#8a8a8a"/></svg>
</div>
</div>

<!-- ================= TASKBAR ================= -->
<div id="taskbar">
  <!-- start -->
  <svg style="left:15.8px;top:11.8px" width="16.4" height="16.2" viewBox="0 0 17 17" fill="#fff"><path d="M0 2.4L7 1.4V8H0Z"/><path d="M8 1.25L17 0V8H8Z"/><path d="M0 9H7V15.6L0 14.6Z"/><path d="M8 9H17V17L8 15.75Z"/></svg>
  <!-- file explorer -->
  <svg style="left:63.5px;top:9.6px" width="23" height="19" viewBox="0 0 23 19">
    <path d="M0.5 2.2C0.5 1.5 1 1 1.7 1H8.2L10.4 3.2H21.3C22 3.2 22.5 3.7 22.5 4.4V6H0.5Z" fill="#e9a822"/>
    <path d="M0.5 4.6H22.5V17C22.5 17.6 22 18.1 21.4 18.1H1.6C1 18.1 0.5 17.6 0.5 17Z" fill="#fcd462"/>
    <path d="M5.2 18.1V11.2H17.8V18.1H15V13.8H8V18.1Z" fill="#3f8fd6"/>
  </svg>
  <!-- chrome -->
  <svg style="left:112px;top:7.6px" width="25" height="25" viewBox="-12.5 -12.5 25 25">
    <circle r="12.2" fill="#fff"/>
    <path d="M0 0L-10.57 -6.1A12.2 12.2 0 0 1 10.57 -6.1Z" fill="#e33b2e"/>
    <path d="M0 0L10.57 -6.1A12.2 12.2 0 0 1 0 12.2Z" fill="#fcc934"/>
    <path d="M0 0L0 12.2A12.2 12.2 0 0 1 -10.57 -6.1Z" fill="#1e9c4c"/>
    <path d="M-10.57 -6.1A12.2 12.2 0 0 1 10.57 -6.1L0 -6.1Z" fill="#e33b2e"/>
    <path d="M5.28 3.05L0 12.2A12.2 12.2 0 0 0 10.57 -6.1H0Z" fill="#fcc934"/>
    <path d="M-5.28 3.05L-10.57 -6.1A12.2 12.2 0 0 0 0 12.2L5.28 3.05Z" fill="#1e9c4c"/>
    <circle r="6.1" fill="#fff"/><circle r="4.75" fill="#2f7de6"/>
  </svg>
  <!-- line -->
  <svg style="left:160.5px;top:8px" width="25" height="24" viewBox="0 0 25 24">
    <rect x="0" y="0" width="25" height="24" rx="4.6" fill="#10b81c"/>
    <path d="M12.5 4C17.6 4 21.6 7.1 21.6 11C21.6 13.2 20.4 15 18.4 16.6C16.6 18.2 13.6 20 12.4 20.4C11.6 20.7 11.8 20 11.9 19.5C12 18.9 12.1 18.3 11.8 18C6.9 17.7 3.4 14.7 3.4 11C3.4 7.1 7.4 4 12.5 4Z" fill="#fff"/>
    <text x="12.5" y="13.1" font-family="Liberation Sans, sans-serif" font-size="5.2" font-weight="700" fill="#10b81c" text-anchor="middle" letter-spacing="0.1">LINE</text>
  </svg>
  <!-- edge (active) -->
  <div class="abs" style="left:198px;top:0;width:48px;height:40px;background:#3e4f59"></div>
  <svg style="left:209.5px;top:8.3px" width="25" height="25" viewBox="0 0 25 25">
    <defs>
      <linearGradient id="edA" x1="0" y1="0" x2="1" y2="1"><stop offset="0" stop-color="#35c1f1"/><stop offset="0.55" stop-color="#39c88a"/><stop offset="1" stop-color="#7fdc5a"/></linearGradient>
      <linearGradient id="edB" x1="0" y1="0" x2="0" y2="1"><stop offset="0" stop-color="#1b9de2"/><stop offset="1" stop-color="#1556c0"/></linearGradient>
    </defs>
    <circle cx="12.5" cy="12.5" r="12.2" fill="url(#edA)"/>
    <path d="M0.4 13.6C0.2 8.6 3.8 4.4 9 3.6C14.8 2.8 19.6 5.4 21 9.6C17.6 6.8 12.4 7 9.8 10C7.4 12.8 7.6 17.4 10.6 20.4C12.6 22.4 15.6 23.4 18.8 22.8C16.4 24.4 13.4 25 10.6 24.5C5 23.4 0.7 19 0.4 13.6Z" fill="url(#edB)"/>
    <path d="M9.6 11.6C11 9.4 14 8.6 16.2 10C17.6 10.9 18 12.6 17.2 14C16.6 15 16.6 15.8 17.4 16.6C18.8 17.8 21.6 17.4 24.2 15.2C23.4 19 20.6 22 16.8 22.6C12.6 23.2 9 20.6 8.4 16.6C8.2 14.8 8.6 13 9.6 11.6Z" fill="#0c59a4"/>
  </svg>
  <div class="abs" style="left:104px;top:38px;width:40px;height:2px;background:#76b9ed"></div>
  <div class="abs" style="left:153px;top:38px;width:40px;height:2px;background:#76b9ed"></div>
  <div class="abs" style="left:198px;top:38px;width:48px;height:2px;background:#76b9ed"></div>

  <!-- weather -->
  <svg style="left:1003px;top:8.5px" width="25" height="23" viewBox="0 0 25 23">
    <defs><linearGradient id="sunG" x1="0.2" y1="0" x2="0.6" y2="1"><stop offset="0" stop-color="#fcc62c"/><stop offset="0.55" stop-color="#f9a11f"/><stop offset="1" stop-color="#f4811f"/></linearGradient></defs>
    <circle cx="9.7" cy="11.5" r="9.2" fill="url(#sunG)"/>
    <path d="M11.2 17.4C9.9 17.4 9 16.5 9 15.4C9 14.3 9.9 13.4 11.1 13.4C11.6 12.1 12.8 11.3 14.2 11.3C15.8 11.3 17.1 12.3 17.5 13.7C17.8 13.6 18.1 13.6 18.4 13.6C20.9 13.6 23 14.4 23 15.6C23 16.7 21.9 17.4 20.4 17.4Z" fill="#cbdcf4"/>
    <circle cx="17.4" cy="4.9" r="5.3" fill="#d8311f"/>
    <text x="17.4" y="7.9" font-family="Liberation Sans, sans-serif" font-size="8.4" fill="#fff" text-anchor="middle">1</text>
  </svg>
  <div class="t" style="left:1034.3px;top:13.15px;font-size:14px;color:#fff;letter-spacing:-0.7px">29°C</div>
  <svg class="th" style="left:1072.00px;top:9.85px" width="75.70" height="20.54" viewBox="4 -115 607 150" preserveAspectRatio="none" role="img"><text x="4" y="0" font-size="100" fill="#fff" textLength="607" lengthAdjust="spacingAndGlyphs">มีแดดส่วนใหญ่</text></svg>

  <!-- tray: chevron -->
  <svg style="left:1172.5px;top:15.5px" width="14" height="9" viewBox="0 0 14 9" fill="none" stroke="#fff" stroke-width="1.3"><path d="M0.8 8.2L7 1.6L13.2 8.2"/></svg>
  <!-- meet now -->
  <svg style="left:1197px;top:11.5px" width="13" height="17" viewBox="0 0 13 17" fill="none" stroke="#fff" stroke-width="1.1" stroke-linejoin="round" stroke-linecap="round"><path d="M2.4 2.2C3.6 0.9 6.4 0.9 7.6 2.2"/><path d="M2.4 14.8C3.6 16.1 6.4 16.1 7.6 14.8"/><rect x="0.8" y="4.6" width="7.6" height="7.8" rx="1.4"/><path d="M8.6 7.6L12 5.4V11.6L8.6 9.4"/></svg>
  <!-- display/sync with red dot -->
  <svg style="left:1218.5px;top:11.5px" width="18" height="18" viewBox="0 0 18 18" fill="none" stroke="#fff" stroke-width="1.1" stroke-linejoin="round" stroke-linecap="round"><path d="M0.8 3.4L15.6 0.8V12.6L0.8 14.6Z"/><path d="M5.2 7.2C5.8 5.4 8.2 4.6 9.8 5.8L10.8 6.6M10.9 4.4V6.8H8.6"/><path d="M11 9C10.4 10.8 8 11.6 6.4 10.4L5.4 9.6M5.3 11.8V9.4H7.6"/><circle cx="13.6" cy="13.6" r="3.4" fill="#e8192c" stroke="none"/></svg>
  <!-- wifi -->
  <svg style="left:1245.5px;top:14px" width="14" height="14" viewBox="0 0 14 14" fill="none" stroke="#fff" stroke-width="1.15" stroke-linecap="round"><path d="M0.8 12.4C0.8 6 6 0.8 12.6 0.8"/><path d="M4.2 12.6C4.2 8 8 4.2 12.8 4.2" opacity=".9"/><path d="M7.6 12.8C7.6 9.8 9.8 7.6 12.8 7.6" opacity=".9"/><circle cx="11.6" cy="12" r="1.5" fill="#fff" stroke="none"/></svg>
  <!-- volume -->
  <svg style="left:1266.5px;top:12.5px" width="18" height="16" viewBox="0 0 18 16" fill="none" stroke="#fff" stroke-width="1.1" stroke-linejoin="round" stroke-linecap="round"><path d="M0.8 5.4H3.4L7.2 1.6V14.4L3.4 10.6H0.8Z"/><path d="M9.4 5.6C10.4 7 10.4 9 9.4 10.4"/><path d="M11.6 3.8C13.4 6.2 13.4 9.8 11.6 12.2"/><path d="M14 2C16.6 5.4 16.6 10.6 14 14" opacity=".45"/></svg>
  <svg class="th" style="left:1296.00px;top:11.25px" width="17.70" height="17.03" viewBox="-3 -115 157 150" preserveAspectRatio="none" role="img"><text x="-3" y="0" font-size="100" fill="#fff" textLength="157" lengthAdjust="spacingAndGlyphs">ไทย</text></svg>
  <div class="t" style="left:1331px;top:5.04px;font-size:12px;color:#fff;letter-spacing:-0.3px">10:06 AM</div>
  <div class="t" style="left:1327px;top:22.44px;font-size:12px;color:#fff;letter-spacing:-0.33px">10/26/2024</div>
  <!-- action centre -->
  <svg style="left:1398.5px;top:12px" width="25" height="24" viewBox="0 0 25 24">
    <path d="M0.6 0.6H16.2V12.4H6.4L3.4 15.4V12.4H0.6Z" fill="#fff"/>
    <path d="M3 3.6H13.8M3 6.4H13.8M3 9.2H10.6" stroke="#1c2b40" stroke-width="1.1"/>
    <circle cx="16.6" cy="15" r="7" fill="#1b2233" stroke="#7d8592" stroke-width="1.2"/>
    <text x="16.6" y="19" font-family="Liberation Sans, sans-serif" font-size="11" font-weight="700" fill="#fff" text-anchor="middle">2</text>
  </svg>
  <div class="abs" style="left:1435px;top:0;width:1px;height:40px;background:#6f7a86"></div>
</div>

</body>
</html>
